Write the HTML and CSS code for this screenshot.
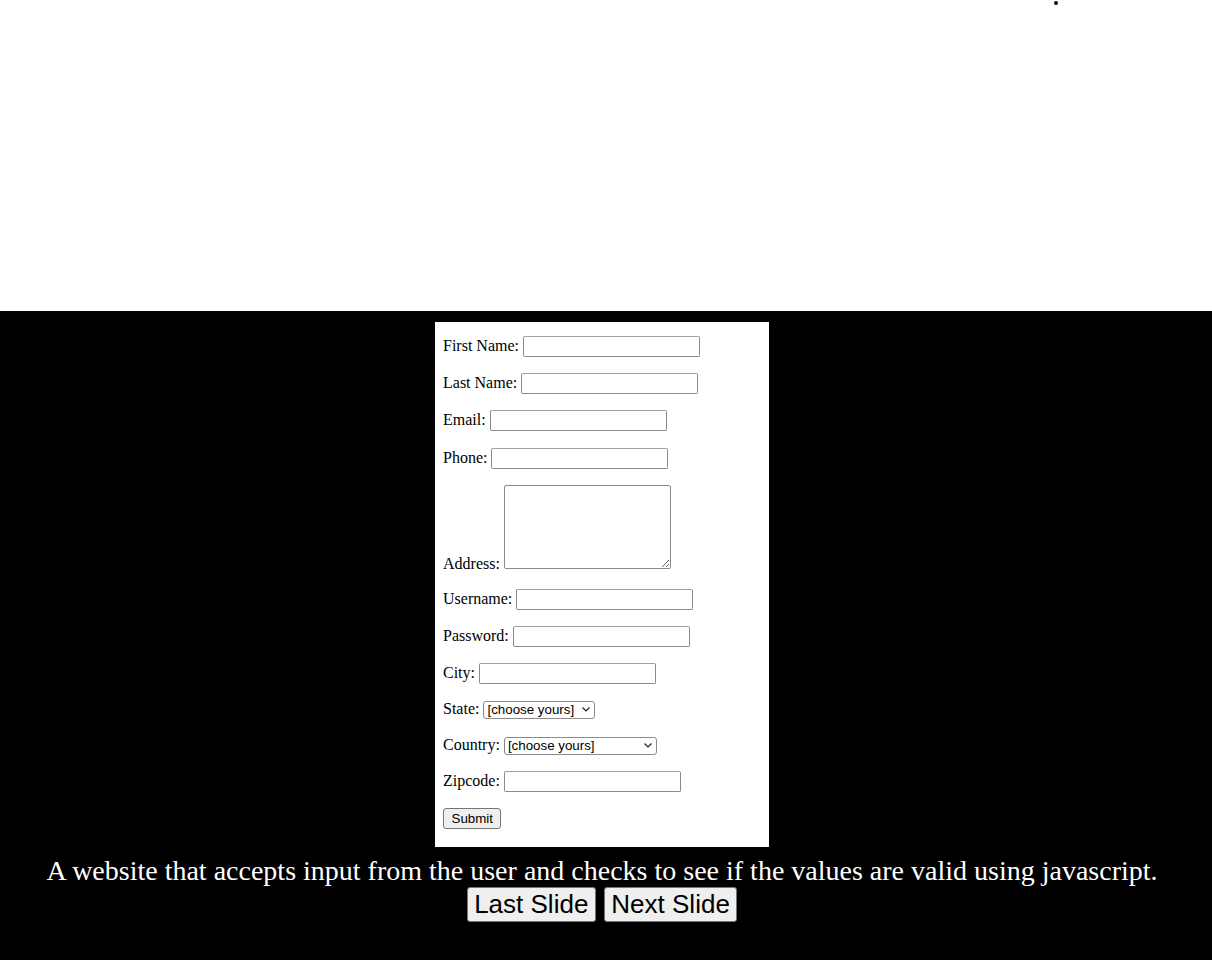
FILE: index.html
```html
<!DOCTYPE html>
<html>
<head>
<meta charset="utf-8">
<title>Form Validation</title>
<link rel="stylesheet" href="styles.css">
</head>
<body>
<div class="top"><span class="dot"></span></div>
<div class="stage">
  <div class="frame">
    <form class="form" onsubmit="return false">
      <p class="row">First Name: <input type="text" class="field"></p>
      <p class="row">Last Name: <input type="text" class="field"></p>
      <p class="row">Email: <input type="text" class="field"></p>
      <p class="row">Phone: <input type="text" class="field"></p>
      <p class="row row-area">Address: <textarea class="area"></textarea></p>
      <p class="row">Username: <input type="text" class="field"></p>
      <p class="row">Password: <input type="password" class="field"></p>
      <p class="row">City: <input type="text" class="field"></p>
      <p class="row">State: <span class="selwrap"><select class="sel sel-state"><option>[choose yours]</option></select><svg class="chev" width="8" height="5" viewBox="0 0 8 5"><path d="M0.5 0.5 L4 4 L7.5 0.5" fill="none" stroke="#222" stroke-width="1.2"/></svg></span></p>
      <p class="row">Country: <span class="selwrap"><select class="sel sel-country"><option>[choose yours]</option></select><svg class="chev" width="8" height="5" viewBox="0 0 8 5"><path d="M0.5 0.5 L4 4 L7.5 0.5" fill="none" stroke="#222" stroke-width="1.2"/></svg></span></p>
      <p class="row">Zipcode: <input type="text" class="field"></p>
      <p class="row"><button type="submit" class="submit">Submit</button></p>
    </form>
  </div>
  <p class="caption">A website that accepts input from the user and checks to see if the values are valid using javascript.</p>
  <div class="nav">
    <button class="navbtn">Last Slide</button>
    <button class="navbtn">Next Slide</button>
  </div>
</div>
</body>
</html>
```
FILE: styles.css
```css
html, body {
  margin: 0;
  padding: 0;
  background: #fff;
}
body {
  font-family: "Liberation Serif", "Times New Roman", serif;
}
.top {
  height: 311px;
  position: relative;
}
.dot {
  position: absolute;
  left: 1054px;
  top: 1px;
  width: 4px;
  height: 4px;
  border-radius: 50%;
  background: #000;
}
.stage {
  background: #000;
  height: 649px;
  box-sizing: border-box;
  padding: 11px 8px 0 0;
  display: flex;
  flex-direction: column;
  align-items: center;
}
.frame {
  width: 334px;
  height: 525px;
  box-sizing: border-box;
  background: #fff;
  padding: 14px 8px 0;
  font-size: 16px;
  color: #000;
}
.form {
  margin: 0;
}
.row {
  margin: 0 0 16.2px;
}
.row-area {
  margin-bottom: 16px;
}
.field {
  box-sizing: border-box;
  width: 177px;
  height: 21px;
  padding: 1px 2px;
  border: 1px solid #8a8a8a;
  border-top-color: #a0a0a0;
  border-radius: 2px;
  background: #fff;
  font-family: "Liberation Sans", Arial, sans-serif;
  font-size: 13.33px;
}
.area {
  width: 167px;
  height: 84px;
  box-sizing: border-box;
  border: 1px solid #8a8a8a;
  border-radius: 2px;
  vertical-align: baseline;
}
.selwrap {
  position: relative;
  display: inline-block;
}
.sel {
  -webkit-appearance: none;
  appearance: none;
  box-sizing: border-box;
  height: 18px;
  padding: 0 0 0 3px;
  border: 1px solid #8a8a8a;
  border-radius: 3px;
  background: #fff;
  color: #000;
  font-family: "Liberation Sans", Arial, sans-serif;
  font-size: 13.33px;
  line-height: 16px;
}
.chev {
  position: absolute;
  right: 5px;
  top: 7px;
  pointer-events: none;
}
.sel-state {
  width: 112px;
}
.sel-country {
  width: 153px;
}
.submit {
  box-sizing: border-box;
  height: 21px;
  padding: 1px 7.5px;
  border: 1px solid #767676;
  border-radius: 3px;
  background: #efefef;
  color: #000;
  font-family: "Liberation Sans", Arial, sans-serif;
  font-size: 13.33px;
}
.caption {
  margin: 8px 0 0;
  color: #fff;
  font-size: 28px;
  line-height: normal;
  text-align: center;
}
.nav {
  display: flex;
  gap: 8px;
  margin-top: 0;
}
.navbtn {
  box-sizing: border-box;
  height: 35px;
  padding: 1px 6.5px;
  border: 1px solid #767676;
  border-radius: 3px;
  background: #efefef;
  color: #000;
  font-family: "Liberation Sans", Arial, sans-serif;
  font-size: 26px;
}
```
